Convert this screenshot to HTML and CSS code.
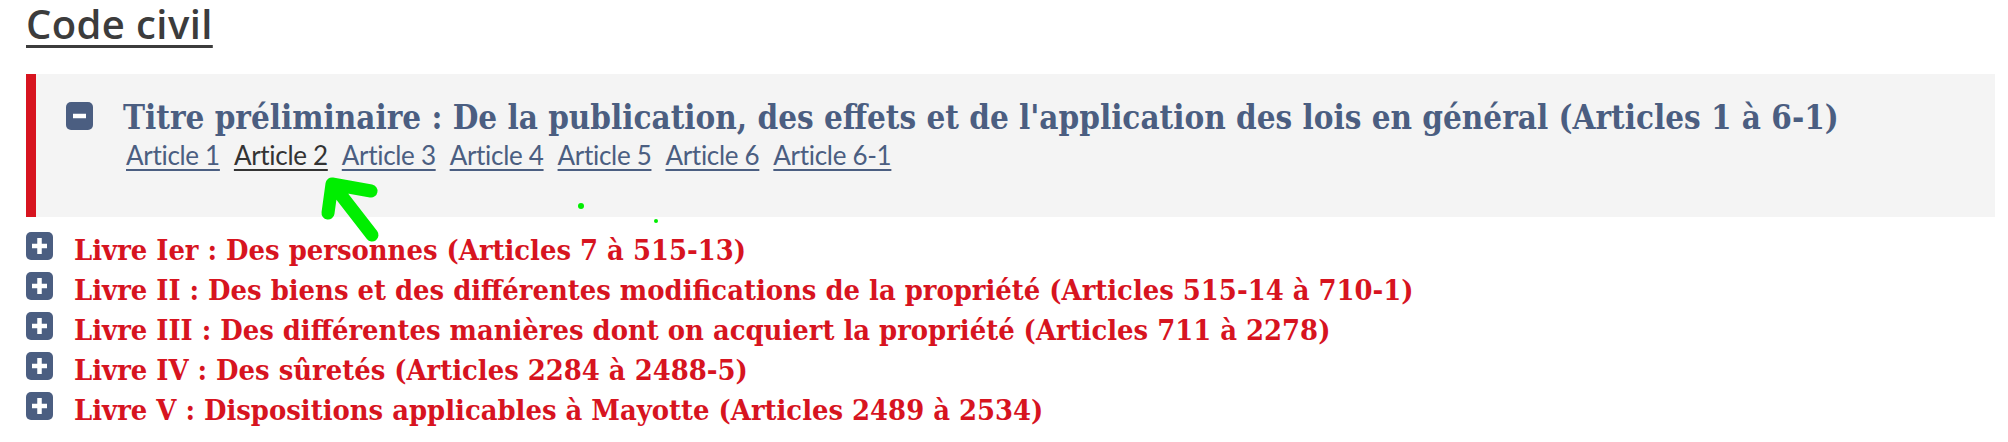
FILE: index.html
```html
<!DOCTYPE html>
<html lang="fr">
<head>
<meta charset="utf-8">
<title>Code civil</title>
<link rel="stylesheet" href="styles.css">
</head>
<body>
<main class="page">
  <h1 class="code-title"><a href="#">Code civil</a></h1>
  <ul class="toc">
    <li class="toc-item is-open">
      <div class="toc-head">
        <svg class="toggle" viewBox="0 0 27 28" aria-hidden="true"><rect width="27" height="28" rx="5"/><path d="M7 14H20"/></svg>
        <span class="toc-title">Titre préliminaire : De la publication, des effets et de l'application des lois en général (Articles 1 à 6-1)</span>
      </div>
      <ul class="articles">
        <li><a href="#">Article 1</a></li>
        <li><a href="#" class="is-visited">Article 2</a></li>
        <li><a href="#">Article 3</a></li>
        <li><a href="#">Article 4</a></li>
        <li><a href="#">Article 5</a></li>
        <li><a href="#">Article 6</a></li>
        <li><a href="#">Article 6-1</a></li>
      </ul>
    </li>
    <li class="toc-item">
      <div class="toc-head">
        <svg class="toggle" viewBox="0 0 27 28" aria-hidden="true"><rect width="27" height="28" rx="5"/><path d="M6 14H21M13.5 6V22"/></svg>
        <a href="#" class="toc-link">Livre Ier : Des personnes (Articles 7 à 515-13)</a>
      </div>
    </li>
    <li class="toc-item">
      <div class="toc-head">
        <svg class="toggle" viewBox="0 0 27 28" aria-hidden="true"><rect width="27" height="28" rx="5"/><path d="M6 14H21M13.5 6V22"/></svg>
        <a href="#" class="toc-link">Livre II : Des biens et des différentes modifications de la propriété (Articles 515-14 à 710-1)</a>
      </div>
    </li>
    <li class="toc-item">
      <div class="toc-head">
        <svg class="toggle" viewBox="0 0 27 28" aria-hidden="true"><rect width="27" height="28" rx="5"/><path d="M6 14H21M13.5 6V22"/></svg>
        <a href="#" class="toc-link">Livre III : Des différentes manières dont on acquiert la propriété (Articles 711 à 2278)</a>
      </div>
    </li>
    <li class="toc-item">
      <div class="toc-head">
        <svg class="toggle" viewBox="0 0 27 28" aria-hidden="true"><rect width="27" height="28" rx="5"/><path d="M6 14H21M13.5 6V22"/></svg>
        <a href="#" class="toc-link">Livre IV : Des sûretés (Articles 2284 à 2488-5)</a>
      </div>
    </li>
    <li class="toc-item">
      <div class="toc-head">
        <svg class="toggle" viewBox="0 0 27 28" aria-hidden="true"><rect width="27" height="28" rx="5"/><path d="M6 14H21M13.5 6V22"/></svg>
        <a href="#" class="toc-link">Livre V : Dispositions applicables à Mayotte (Articles 2489 à 2534)</a>
      </div>
    </li>
  </ul>
  <svg class="annotation" viewBox="0 0 2008 442" aria-hidden="true">
    <path d="M328 213 L332 184 L371 191 M334 186 L372 235"/>
    <circle cx="581" cy="206" r="3"/>
    <circle cx="656" cy="221" r="2"/>
  </svg>
</main>
</body>
</html>
```

FILE: styles.css
```css
* { box-sizing: border-box; }

html, body {
  margin: 0;
  padding: 0;
  background: #ffffff;
}

body {
  width: 2008px;
  height: 442px;
  overflow: hidden;
  font-family: "Lato", "Open Sans", sans-serif;
}

.page {
  position: relative;
  padding: 0 13px 0 26px;
  height: 442px;
}

.code-title {
  margin: 0 0 26px 0;
  font-family: "Open Sans", "Lato", sans-serif;
  font-weight: 600;
  font-size: 40px;
  letter-spacing: 0.4px;
  line-height: 48px;
}

.code-title a {
  color: #3c3c3c;
  text-decoration: underline;
  text-decoration-thickness: 3px;
  text-underline-offset: 6px;
}

.toc {
  list-style: none;
  margin: 0;
  padding: 0;
}

.toc-item {
  margin: 0;
}

.toc-item.is-open {
  background: #f4f4f4;
  border-left: 10px solid #d7141f;
  padding: 24px 0 45px 30px;
  margin-bottom: 13px;
}

.toc-head {
  display: flex;
  align-items: flex-start;
  gap: 30px;
}

.toc-item:not(.is-open) .toc-head {
  gap: 21px;
}

.toggle {
  flex: 0 0 auto;
  width: 27px;
  height: 28px;
  margin-top: 4px;
}

.toc-item:not(.is-open) .toggle {
  margin-top: 2px;
}

.toggle rect {
  fill: #4b5e81;
}

.toggle path {
  stroke: #ffffff;
  stroke-width: 4.5;
  fill: none;
}

.toc-title,
.toc-link {
  font-family: "DejaVu Serif", "Liberation Serif", serif;
  font-stretch: condensed;
  font-weight: 700;
}

.toc-title {
  color: #4b5e81;
  font-size: 32.9px;
  line-height: 40px;
}

.toc-link {
  color: #d7141f;
  text-decoration: none;
  font-size: 28.8px;
  line-height: 40px;
}

.articles {
  list-style: none;
  margin: 0;
  padding: 0 0 0 60px;
  display: flex;
  gap: 14px;
  font-family: "Lato", sans-serif;
  font-size: 26px;
  letter-spacing: -0.3px;
  line-height: 34px;
}

.articles a {
  color: #4b5e81;
  text-decoration: underline;
  text-decoration-thickness: 2px;
  text-underline-offset: 4px;
}

.articles a.is-visited {
  color: #333333;
}

.annotation {
  position: absolute;
  left: 0;
  top: 0;
  width: 2008px;
  height: 442px;
  pointer-events: none;
}

.annotation path {
  fill: none;
  stroke: #00ee00;
  stroke-width: 13;
  stroke-linecap: round;
  stroke-linejoin: round;
}

.annotation circle {
  fill: #00ee00;
}
```
